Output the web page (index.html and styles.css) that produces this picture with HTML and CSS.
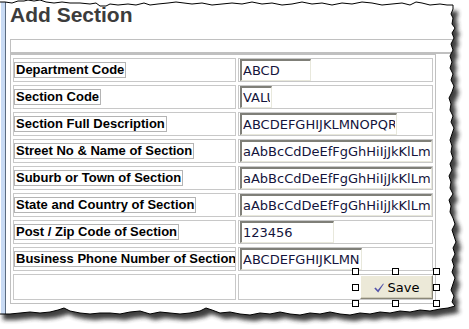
FILE: index.html
```html
<!DOCTYPE html>
<html lang="en">
<head>
    <meta charset="UTF-8">
    <title>Add Section</title>
    <link rel="stylesheet" href="styles.css">
</head>
<body>
    <div class="page">
        <div class="sidebar"></div>

        <div class="main">
            <h1 class="title">Add Section</h1>
            <div class="strip"></div>

            <table class="form-table">
                <tr>
                    <td class="label-cell"><span class="label">Department Code</span></td>
                    <td class="field-cell"><input class="field w-dept" type="text" value="ABCD"></td>
                </tr>
                <tr>
                    <td class="label-cell"><span class="label">Section Code</span></td>
                    <td class="field-cell"><input class="field w-code" type="text" value="VALUE"></td>
                </tr>
                <tr>
                    <td class="label-cell"><span class="label">Section Full Description</span></td>
                    <td class="field-cell"><input class="field w-desc" type="text" value="ABCDEFGHIJKLMNOPQRSTUVWXYZ"></td>
                </tr>
                <tr>
                    <td class="label-cell"><span class="label">Street No &amp; Name of Section</span></td>
                    <td class="field-cell"><input class="field w-full" type="text" value="aAbBcCdDeEfFgGhHiIjJkKlLmMnNoOpP"></td>
                </tr>
                <tr>
                    <td class="label-cell"><span class="label">Suburb or Town of Section</span></td>
                    <td class="field-cell"><input class="field w-full" type="text" value="aAbBcCdDeEfFgGhHiIjJkKlLmMnNoOpP"></td>
                </tr>
                <tr>
                    <td class="label-cell"><span class="label">State and Country of Section</span></td>
                    <td class="field-cell"><input class="field w-full" type="text" value="aAbBcCdDeEfFgGhHiIjJkKlLmMnNoOpP"></td>
                </tr>
                <tr>
                    <td class="label-cell"><span class="label">Post / Zip Code of Section</span></td>
                    <td class="field-cell"><input class="field w-post" type="text" value="123456"></td>
                </tr>
                <tr>
                    <td class="label-cell"><span class="label">Business Phone Number of Section</span></td>
                    <td class="field-cell"><input class="field w-phone" type="text" value="ABCDEFGHIJKLMNOPQRST"></td>
                </tr>
                <tr>
                    <td class="label-cell"></td>
                    <td class="field-cell action-cell">
                        <div class="selected">
                            <button class="save-btn" type="button">
                                <svg class="check" width="10" height="10" viewBox="0 0 10 10"><path d="M0.3 5.6 L1.6 4.6 L3.9 6.9 L9.2 0.4 L9.8 0.9 L4.2 9.6 Z" fill="#5454aa"/></svg>Save
                            </button>
                            <span class="handle h-tl"></span>
                            <span class="handle h-tc"></span>
                            <span class="handle h-tr"></span>
                            <span class="handle h-ml"></span>
                            <span class="handle h-mr"></span>
                            <span class="handle h-bl"></span>
                            <span class="handle h-bc"></span>
                            <span class="handle h-br"></span>
                        </div>
                    </td>
                </tr>
            </table>
        </div>

        <!-- torn paper edge + drop shadow laid over the page -->
        <svg class="paper-edge" width="469" height="329" viewBox="0 0 469 329">
            <defs>
                <polygon id="paper" points="-2,2 5,2 12,3 18,1 24,1 28,0 34,1 40,0 46,2 54,3 62,2 70,3 80,3 90,4 96,3 100,6 106,6 110,4 118,5 128,4 136,5 144,3 150,5 158,4 168,3 176,2 184,3 192,4 202,3 212,5 222,4 232,3 242,4 252,2 262,4 272,3 282,5 292,4 302,2 312,4 322,3 332,5 342,3 352,4 362,2 372,3 382,5 392,4 402,3 410,5 416,2 422,3 430,5 440,4 447,5 453,5 453,9 451,14 453,18 452,24 455,28 452,33 454,38 451,44 453,50 450,56 452,62 450,68 453,74 451,80 454,86 452,92 449,98 451,104 450,110 453,116 451,122 454,128 452,134 450,140 452,146 451,152 453,158 450,164 452,170 449,176 451,182 450,188 453,194 449,200 451,206 450,212 453,218 455,224 452,230 454,236 456,242 453,248 455,254 452,260 454,266 452,272 455,278 453,284 451,290 454,296 452,302 455,306 448,308 440,309 430,311 420,310 410,312 400,311 390,313 380,312 370,314 360,313 350,315 340,314 330,312 320,314 310,313 300,315 290,314 280,312 270,314 260,313 250,315 240,314 230,312 220,313 212,310 206,308 200,311 190,313 180,314 170,313 160,312 150,314 140,311 130,312 120,314 110,313 100,313 90,314 80,313 70,311 64,308 58,310 50,312 40,313 30,312 20,313 10,314 0,314 -2,314"/>
                <clipPath id="outside">
                    <path clip-rule="evenodd" d="M-10 -10H480V340H-10Z M-2,2 5,2 12,3 18,1 24,1 28,0 34,1 40,0 46,2 54,3 62,2 70,3 80,3 90,4 96,3 100,6 106,6 110,4 118,5 128,4 136,5 144,3 150,5 158,4 168,3 176,2 184,3 192,4 202,3 212,5 222,4 232,3 242,4 252,2 262,4 272,3 282,5 292,4 302,2 312,4 322,3 332,5 342,3 352,4 362,2 372,3 382,5 392,4 402,3 410,5 416,2 422,3 430,5 440,4 447,5 453,5 453,9 451,14 453,18 452,24 455,28 452,33 454,38 451,44 453,50 450,56 452,62 450,68 453,74 451,80 454,86 452,92 449,98 451,104 450,110 453,116 451,122 454,128 452,134 450,140 452,146 451,152 453,158 450,164 452,170 449,176 451,182 450,188 453,194 449,200 451,206 450,212 453,218 455,224 452,230 454,236 456,242 453,248 455,254 452,260 454,266 452,272 455,278 453,284 451,290 454,296 452,302 455,306 448,308 440,309 430,311 420,310 410,312 400,311 390,313 380,312 370,314 360,313 350,315 340,314 330,312 320,314 310,313 300,315 290,314 280,312 270,314 260,313 250,315 240,314 230,312 220,313 212,310 206,308 200,311 190,313 180,314 170,313 160,312 150,314 140,311 130,312 120,314 110,313 100,313 90,314 80,313 70,311 64,308 58,310 50,312 40,313 30,312 20,313 10,314 0,314 -2,314Z"/>
                </clipPath>
                <filter id="soft" x="-10%" y="-10%" width="120%" height="120%">
                    <feGaussianBlur stdDeviation="2"/>
                </filter>
            </defs>
            <g clip-path="url(#outside)">
                <rect x="-10" y="-10" width="490" height="350" fill="#fff"/>
                <use href="#paper" transform="translate(5,6)" fill="#2a2a2a" opacity="0.9" filter="url(#soft)"/>
            </g>
            <use href="#paper" fill="none" stroke="#000" stroke-width="1"/>
        </svg>
    </div>
</body>
</html>
```

FILE: styles.css
```css
* {
    box-sizing: border-box;
    margin: 0;
    padding: 0;
}

body {
    background: #fff;
    font-family: "Liberation Sans", Arial, sans-serif;
}

.page {
    position: relative;
    display: flex;
    width: 469px;
    height: 329px;
    overflow: hidden;
}

.sidebar {
    width: 6px;
    background: #c9dbf4;
    border-left: 1px solid #fff;
    border-right: 1px solid #5b6b80;
}

.main {
    flex: 1;
    padding-left: 4px;
}

.title {
    font-size: 21px;
    font-weight: bold;
    line-height: 24px;
    padding-top: 3px;
    margin-bottom: 12px;
    color: #3c3c3c;
}

.strip {
    height: 15px;
    border: 1px solid #c0c0c0;
    border-bottom-width: 2px;
    border-right: 0;
}

.form-table {
    width: 426px;
    table-layout: fixed;
    border: 1px solid #c0c0c0;
    border-spacing: 2px 3px;
    margin-top: 0;
}

.form-table td {
    border: 1px solid #c8c8c8;
    padding: 0;
    font-size: 13px;
    line-height: 14px;
    vertical-align: middle;
    white-space: nowrap;
    overflow: hidden;
}

.label-cell {
    width: 223px;
}

.field-cell {
    width: 195px;
}

.form-table .field-cell {
    padding-left: 1px;
}

.label {
    display: inline-block;
    vertical-align: middle;
    border: 1px solid #b4b4b4;
    padding: 0 1px;
    font-weight: bold;
    color: #000;
}

.field {
    display: block;
    height: 22px;
    padding: 0 1px;
    font-family: "DejaVu Sans", Verdana, sans-serif;
    font-size: 13px;
    color: #14143c;
    background: #fff;
    border-style: solid;
    border-width: 2px 1px 1px 2px;
    border-color: #7f7f78 #e8e8dc #e8e8dc #7f7f78;
    outline: none;
}

.w-dept { width: 71px; }
.w-code { width: 32px; }
.w-desc { width: 157px; }
.w-full { width: 192px; }
.w-post { width: 94px; }
.w-phone { width: 122px; }

.form-table .action-cell {
    overflow: visible;
}

.selected {
    position: relative;
    width: 73px;
    margin-left: auto;
    margin-right: -1px;
}

.save-btn {
    display: block;
    width: 73px;
    height: 24px;
    font-family: "DejaVu Sans", Verdana, sans-serif;
    font-size: 13px;
    color: #000;
    background: #ece9d8;
    border: 1px solid;
    border-color: #fff #8a8778 #8a8778 #fff;
    box-shadow: inset -1px -1px 0 #cfcbb8;
}

.check {
    margin-right: 4px;
    vertical-align: -1px;
}

.handle {
    position: absolute;
    width: 7px;
    height: 7px;
    background: #fff;
    border: 1px solid #000;
}

.h-tl { left: -8px; top: -7px; }
.h-tc { left: 32px; top: -7px; }
.h-tr { left: 73px; top: -7px; }
.h-ml { left: -8px; top: 9px; }
.h-mr { left: 73px; top: 9px; }
.h-bl { left: -8px; top: 25px; }
.h-bc { left: 32px; top: 25px; }
.h-br { left: 73px; top: 25px; }

.paper-edge {
    position: absolute;
    left: 0;
    top: 0;
    pointer-events: none;
}
```
